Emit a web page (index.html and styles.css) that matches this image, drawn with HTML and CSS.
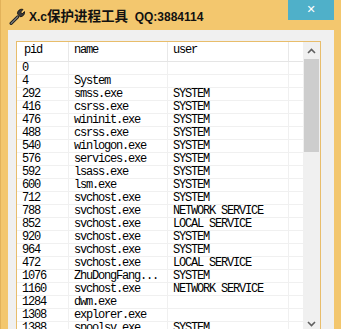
FILE: index.html
```html
<!DOCTYPE html>
<html lang="zh-CN">
<head>
  <meta charset="UTF-8" />
  <title>X.c保护进程工具</title>
  <link rel="stylesheet" href="styles.css">
</head>
<body>
  <div class="window">
    <div class="titlebar">
      <svg class="app-icon" width="17" height="17" viewBox="0 0 16 16">
        <path d="M2 14.5 L8.2 8.3" stroke="#222" stroke-width="3" stroke-linecap="round"/>
        <path d="M2 14.5 L8.2 8.3" stroke="#888" stroke-width="1" stroke-linecap="round"/>
        <path d="M8 5.5 A4 4 0 0 1 13.2 1.3 L11 3.8 L12.3 5.6 L14.6 3.4 A4 4 0 0 1 10.4 8.2 Z" fill="#3a3a3a" stroke="#111" stroke-width="0.8"/>
      </svg>
      <span class="title">X.c<span class="cjk">保护进程工具</span>&nbsp;&nbsp;QQ:3884114</span>
      <div class="close">✕</div>
    </div>
    <div class="client">
      <div class="list">
        <div class="table">
          <div class="row head">
            <div class="c pid">pid</div>
            <div class="c name">name</div>
            <div class="c user">user</div>
            <div class="c rest"></div>
          </div>
          <div id="rows"></div>
        </div>
        <div class="scrollbar">
          <div class="arrow">
            <svg width="9" height="6" viewBox="0 0 9 6"><path d="M1 5 L4.5 1.5 L8 5" fill="none" stroke="#606060" stroke-width="1.6"/></svg>
          </div>
          <div class="thumb"></div>
          <div class="track"></div>
          <div class="arrow">
            <svg width="9" height="6" viewBox="0 0 9 6"><path d="M1 1 L4.5 4.5 L8 1" fill="none" stroke="#606060" stroke-width="1.6"/></svg>
          </div>
        </div>
      </div>
    </div>
  </div>

  <script>
    var procs = [
      ["0", "", ""],
      ["4", "System", ""],
      ["292", "smss.exe", "SYSTEM"],
      ["416", "csrss.exe", "SYSTEM"],
      ["476", "wininit.exe", "SYSTEM"],
      ["488", "csrss.exe", "SYSTEM"],
      ["540", "winlogon.exe", "SYSTEM"],
      ["576", "services.exe", "SYSTEM"],
      ["592", "lsass.exe", "SYSTEM"],
      ["600", "lsm.exe", "SYSTEM"],
      ["712", "svchost.exe", "SYSTEM"],
      ["788", "svchost.exe", "NETWORK SERVICE"],
      ["852", "svchost.exe", "LOCAL SERVICE"],
      ["920", "svchost.exe", "SYSTEM"],
      ["964", "svchost.exe", "SYSTEM"],
      ["472", "svchost.exe", "LOCAL SERVICE"],
      ["1076", "ZhuDongFang...", "SYSTEM"],
      ["1160", "svchost.exe", "NETWORK SERVICE"],
      ["1284", "dwm.exe", ""],
      ["1308", "explorer.exe", ""],
      ["1388", "spoolsv.exe", "SYSTEM"]
    ];
    var box = document.getElementById("rows");
    procs.forEach(function (p) {
      var row = document.createElement("div");
      row.className = "row";
      row.innerHTML =
        '<div class="c pid">' + p[0] + '</div>' +
        '<div class="c name">' + p[1] + '</div>' +
        '<div class="c user">' + p[2] + '</div>' +
        '<div class="c rest"></div>';
      box.appendChild(row);
    });
  </script>
</body>
</html>
```

FILE: styles.css
```css
body {
  margin: 0;
  overflow: hidden;
  background: #f3c76e;
}
.window {
  width: 341px;
  height: 360px;
  box-sizing: border-box;
  background: #f3c76e;
  border-left: 1px solid #e2b25a;
  padding: 0 7px 0 7px;
}
.titlebar {
  height: 30px;
  display: flex;
  align-items: flex-start;
  position: relative;
}
.app-icon {
  flex: none;
  margin: 8px 0 0 1px;
}
.title {
  margin: 6px 0 0 3px;
  font-family: "Liberation Sans", "Noto Sans CJK SC", sans-serif;
  font-weight: bold;
  font-size: 12px;
  line-height: 18px;
  color: #111;
  white-space: nowrap;
}
.title .cjk {
  font-family: "Noto Sans CJK SC", sans-serif;
  font-size: 13.5px;
}
.close {
  position: absolute;
  right: 0;
  top: 0;
  width: 46px;
  height: 20px;
  background: #4fb0c9;
  color: #fff;
  font-family: "DejaVu Sans", sans-serif;
  font-size: 11px;
  font-weight: bold;
  line-height: 20px;
  text-align: center;
}
.client {
  background: #f0f0f0;
  height: 330px;
  padding: 11px 13px 0 8px;
}
.list {
  display: flex;
  border: 1px solid #e8bd6b;
  background: #fff;
  height: 290px;
}
.table {
  flex: 1;
  font-family: "Liberation Mono", "DejaVu Sans Mono", monospace;
  font-size: 12px;
  letter-spacing: -1.2px;
  color: #000;
  overflow: hidden;
}
.row {
  display: flex;
  height: 13px;
  line-height: 12px;
  border-bottom: 1px solid #f0f0f0;
  box-sizing: border-box;
}
.row.head {
  height: 20px;
  line-height: 17px;
  border-bottom: 1px solid #e5e5e5;
}
.c {
  box-sizing: border-box;
  padding-left: 5px;
  white-space: nowrap;
  border-right: 1px solid #f0f0f0;
}
.head .c {
  border-right-color: #e8e8e8;
}
.head .pid {
  padding-left: 7px;
}
.pid {
  width: 52px;
}
.name {
  width: 99px;
}
.user {
  width: 121px;
}
.rest {
  flex: 1;
  border-right: none;
}
.scrollbar {
  width: 17px;
  display: flex;
  flex-direction: column;
  background: #f0f0f0;
}
.arrow {
  height: 17px;
  display: flex;
  align-items: center;
  justify-content: center;
}
.thumb {
  height: 93px;
  margin: 0 1px;
  background: #cdcdcd;
}
.track {
  flex: 1;
}
```
